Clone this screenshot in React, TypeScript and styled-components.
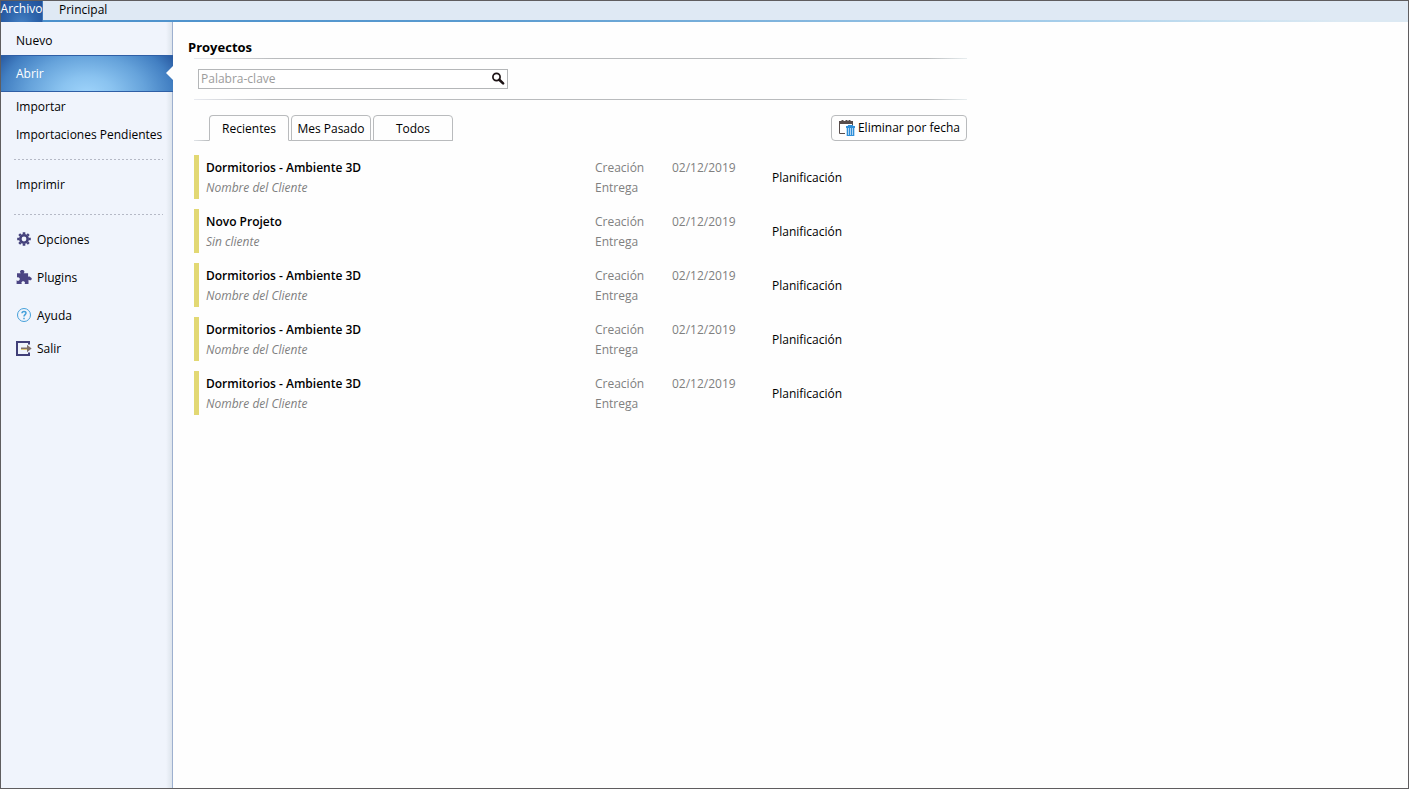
import React, { useState } from "react";
import styled, { createGlobalStyle, css } from "styled-components";

const GlobalStyle = createGlobalStyle`
  * { box-sizing: border-box; }
  body {
    margin: 0;
    background: #fefefe;
    color: #000;
    font: 12px/20px "Open Sans", "Noto Sans", sans-serif;
  }
  button, input { font: inherit; color: inherit; }
`;

const Shell = styled.div`
  min-height: 100vh;
  display: flex;
  flex-direction: column;
  border: 1px solid #5f5d5f;
`;

const TopBar = styled.nav`
  display: flex;
  height: 21px;
  background:
    linear-gradient(90deg, #4a8fcb 0%, #5a9bd0 35%, #a5cdea 75%, #c8e0f0 87%, #dce9f3 95%) bottom / 100% 2px no-repeat,
    #dfe9f4;
`;

const MenuTab = styled.button<{ $active?: boolean }>`
  height: 18px;
  padding: 0 16px;
  border: 0;
  background: none;
  line-height: 18px;
  white-space: nowrap;
  ${(p) =>
    p.$active &&
    css`
      display: flex;
      justify-content: center;
      width: 42px;
      height: 21px;
      padding: 0;
      border-right: 1px solid #3f78bb;
      background: radial-gradient(ellipse at 50% 120%, #4a86c8 0%, #2f66ad 50%, #1f4f98 100%);
      color: #fff;
      line-height: 16px;
    `}
`;

const Body = styled.div`
  display: flex;
  flex: 1;
`;

const Sidebar = styled.aside`
  flex: none;
  width: 172px;
  padding-top: 5px;
  border-right: 1px solid #9db0cf;
  background: linear-gradient(270deg, #dde4ec 0, #f0f4fc 6px);
`;

const SideItem = styled.button`
  display: flex;
  align-items: center;
  gap: 5px;
  width: 100%;
  height: 28px;
  padding: 0 15px;
  border: 0;
  background: none;
  text-align: left;
  white-space: nowrap;
  svg { flex: none; }
`;

const SelectedItem = styled(SideItem)`
  position: relative;
  width: 172px;
  height: 37px;
  margin-bottom: 1px;
  border: solid #2f5fa6;
  border-width: 1px 0;
  background: radial-gradient(ellipse 90px 60px at 50% 110%, #9fd4fb 0%, #8ac3f0 30%, #66a3db 65%, #427fc2 95%, #24539b 118%);
  color: #fff;
  &::after {
    content: "";
    position: absolute;
    right: 0;
    top: 10px;
    border: solid transparent;
    border-width: 7px 7px 7px 0;
    border-right-color: #fefefe;
  }
`;

const Divider = styled.hr`
  height: 1px;
  margin: 10px 9px 11px 13px;
  border: 0;
  background: repeating-linear-gradient(90deg, #b5b9c6 0 2px, transparent 2px 4px);
`;

const PrintGroup = styled.div`
  padding-bottom: 5px;
`;

const ToolGroup = styled.div`
  display: flex;
  flex-direction: column;
  gap: 10px;
  margin-bottom: 5px;
`;

const Main = styled.main`
  flex: 1;
  min-width: 0;
  padding: 15px;
`;

const Content = styled.div`
  max-width: 779px;
`;

const Title = styled.h1`
  margin: 0;
  font-size: 13px;
  line-height: 21px;
  font-weight: 700;
`;

const Section = styled.div`
  margin-left: 6px;
`;

const Rule = styled.div`
  height: 1px;
  background: linear-gradient(90deg, #e8eaf0 0, #b9bbbd 80px, #b9bbbd calc(100% - 40px), #e8eef0 100%);
`;

const SearchBox = styled.form`
  display: flex;
  width: 310px;
  height: 20px;
  margin: 10px 4px;
  border: 1px solid #b4b6b8;
  background: #fff;
`;

const SearchInput = styled.input`
  flex: 1;
  min-width: 0;
  padding: 0 0 1px 2px;
  border: 0;
  outline: 0;
  background: none;
  &::placeholder { color: #9c9c9c; opacity: 1; }
`;

const SearchButton = styled.button`
  display: flex;
  padding: 2px;
  border: 0;
  background: none;
`;

const Toolbar = styled.div`
  display: flex;
  justify-content: space-between;
  align-items: flex-end;
  margin-top: 15px;
`;

const Tabs = styled.div`
  display: flex;
  gap: 2px;
  padding-left: 15px;
  background: linear-gradient(90deg, #e0e4e8, #b9bbbd 15px) bottom / 100% 1px no-repeat;
`;

const Tab = styled.button<{ $active: boolean }>`
  width: 80px;
  height: 26px;
  padding: 2px 0 0;
  border: 1px solid #b9bbbd;
  border-bottom-color: ${(p) => (p.$active ? "#fefefe" : "#b9bbbd")};
  border-radius: 4px 4px 0 0;
  background: #fefefe;
  white-space: nowrap;
`;

const ActionButton = styled.button`
  display: flex;
  align-items: center;
  gap: 3px;
  height: 26px;
  padding: 0 6px;
  border: 1px solid #b9bbbd;
  border-radius: 4px;
  background: #fefefe;
  white-space: nowrap;
`;

const ProjectTable = styled.table`
  width: 100%;
  margin-top: 4px;
  border-spacing: 0 10px;
  table-layout: fixed;
`;

const Cell = styled.td<{ $width?: number }>`
  width: ${(p) => (p.$width ? `${p.$width}px` : "auto")};
  height: 44px;
  padding: 3px 0 1px;
  vertical-align: top;
  color: #808080;
`;

const NameCell = styled(Cell)`
  padding-left: 7px;
  border-left: 5px solid #e2d873;
`;

const StatusCell = styled(Cell)`
  vertical-align: middle;
  color: #000;
`;

const ProjectName = styled.strong`
  display: block;
  color: #000;
  font-weight: 600;
`;

const Client = styled.em`
  display: block;
`;

const Line = styled.div`
  height: 20px;
`;

const GearIcon = () => (
  <svg width="16" height="16" viewBox="0 0 16 16" fill="none" stroke="#45427c" aria-hidden="true">
    <circle cx="8" cy="7" r="3.7" strokeWidth="2.600" />
    <path d="M8 .2v2M8 11.800v2M1.200 7h2M12.800 7h2M3.200 2.200l1.500 1.500M11.300 10.300l1.500 1.500M3.200 11.800l1.500-1.500M11.300 3.700l1.500-1.500" strokeWidth="2.600" />
  </svg>
);

const PuzzleIcon = () => (
  <svg width="16" height="16" viewBox="0 0 16 16" fill="#4c4584" aria-hidden="true">
    <path d="M1 3.200h3.800C4.200 2.600 4 2.200 4 1.700 4 .7 5 0 6.200 0s2.200.7 2.200 1.700c0 .5-.2.9-.8 1.500h4.500v3.600c.6-.4 1-.5 1.500-.3l1.900 1.400c.5.5.3 1.600-.3 2-.6.5-1.400.5-2.100.1l-.6-.2V14H8.600c.4-.7.5-1.200.3-1.700-.3-.7-1-1.100-1.700-1.100s-1.500.4-1.700 1.100c-.2.5 0 1 .3 1.700H.6v-3.700c.7.5 1.300.7 1.900.5.800-.2 1.300-.9 1.300-1.700S3.300 7.600 2.600 7.400C2 7.200 1.500 7.300 1 7.600z" />
  </svg>
);

const HelpIcon = () => (
  <svg width="16" height="16" viewBox="0 0 16 16" fill="none" stroke="#45a0da" aria-hidden="true">
    <circle cx="8" cy="7" r="6.500" strokeWidth="1" />
    <path d="M6 5.300C6 4 6.800 3.400 8 3.400s2 .7 2 1.700c0 1.500-2 1.600-2 3.500M8 9.700v1.500" strokeWidth="1.500" />
  </svg>
);

const ExitIcon = () => (
  <svg width="16" height="16" viewBox="0 0 16 16" fill="none" aria-hidden="true">
    <path d="M13 3.500V1H1v13h12v-2.500" stroke="#413f78" strokeWidth="2" />
    <path d="M5 7.500h7" stroke="#80706a" strokeWidth="2" />
    <path d="M5 8.500h6" stroke="#e0c979" strokeWidth="1" />
    <path d="M11 3.700L15.600 7.500 11 11.300z" fill="#80706a" />
  </svg>
);

const SearchIcon = () => (
  <svg width="14" height="14" viewBox="0 0 14 14" fill="none" stroke="#1d1315" aria-hidden="true">
    <circle cx="5.500" cy="5" r="3.600" strokeWidth="1.700" />
    <path d="M8.300 7.800l3.800 3.600" strokeWidth="2.600" strokeLinecap="round" />
  </svg>
);

const CalendarTrashIcon = () => (
  <svg width="17" height="18" viewBox="0 0 17 18" fill="none" aria-hidden="true">
    <path d="M7 14.500H1.500V3.500h13V7" stroke="#574c4b" />
    <path d="M1 2h14v3H1z" fill="#574c4b" />
    <path d="M4.500 1v2M8.500 1v2M11.500 1v2" stroke="#574c4b" strokeWidth="2" />
    <path d="M8 7h9v10H8z" fill="#cfe6f8" />
    <path d="M8 8h9" stroke="#2f8fd8" strokeWidth="2" />
    <path d="M10.500 7.500v-1h4v1M9.500 9v7.500h6V9M11.500 9v7M13.500 9v7" stroke="#2f8fd8" strokeWidth="1.200" />
  </svg>
);

const filters = ["Recientes", "Mes Pasado", "Todos"];

const projects = [
  { name: "Dormitorios - Ambiente 3D", client: "Nombre del Cliente" },
  { name: "Novo Projeto", client: "Sin cliente" },
  { name: "Dormitorios - Ambiente 3D", client: "Nombre del Cliente" },
  { name: "Dormitorios - Ambiente 3D", client: "Nombre del Cliente" },
  { name: "Dormitorios - Ambiente 3D", client: "Nombre del Cliente" },
];

export default function App() {
  const [filter, setFilter] = useState(filters[0]);
  const [keyword, setKeyword] = useState("");

  return (
    <Shell>
      <GlobalStyle />
      <TopBar>
        <MenuTab $active>Archivo</MenuTab>
        <MenuTab>Principal</MenuTab>
      </TopBar>
      <Body>
        <Sidebar>
          <SideItem>Nuevo</SideItem>
          <SelectedItem aria-current="page">Abrir</SelectedItem>
          <SideItem>Importar</SideItem>
          <SideItem>Importaciones Pendientes</SideItem>
          <Divider />
          <PrintGroup>
            <SideItem>Imprimir</SideItem>
          </PrintGroup>
          <Divider />
          <ToolGroup>
            <SideItem><GearIcon />Opciones</SideItem>
            <SideItem><PuzzleIcon />Plugins</SideItem>
            <SideItem><HelpIcon />Ayuda</SideItem>
          </ToolGroup>
          <SideItem><ExitIcon />Salir</SideItem>
        </Sidebar>
        <Main>
          <Content>
            <Title>Proyectos</Title>
            <Section>
              <Rule />
              <SearchBox onSubmit={(e) => e.preventDefault()}>
                <SearchInput
                  aria-label="Palabra-clave"
                  placeholder="Palabra-clave"
                  value={keyword}
                  onChange={(e) => setKeyword(e.target.value)}
                />
                <SearchButton type="submit" aria-label="Buscar"><SearchIcon /></SearchButton>
              </SearchBox>
              <Rule />
              <Toolbar>
                <Tabs role="tablist">
                  {filters.map((f) => (
                    <Tab key={f} role="tab" aria-selected={f === filter} $active={f === filter} onClick={() => setFilter(f)}>
                      {f}
                    </Tab>
                  ))}
                </Tabs>
                <ActionButton><CalendarTrashIcon />Eliminar por fecha</ActionButton>
              </Toolbar>
              <ProjectTable>
                <tbody>
                  {projects.map((p, i) => (
                    <tr key={i}>
                      <NameCell>
                        <ProjectName>{p.name}</ProjectName>
                        <Client>{p.client}</Client>
                      </NameCell>
                      <Cell $width={77}>
                        <Line>Creación</Line>
                        <Line>Entrega</Line>
                      </Cell>
                      <Cell $width={100}>
                        <Line>02/12/2019</Line>
                      </Cell>
                      <StatusCell $width={195}>Planificación</StatusCell>
                    </tr>
                  ))}
                </tbody>
              </ProjectTable>
            </Section>
          </Content>
        </Main>
      </Body>
    </Shell>
  );
}
